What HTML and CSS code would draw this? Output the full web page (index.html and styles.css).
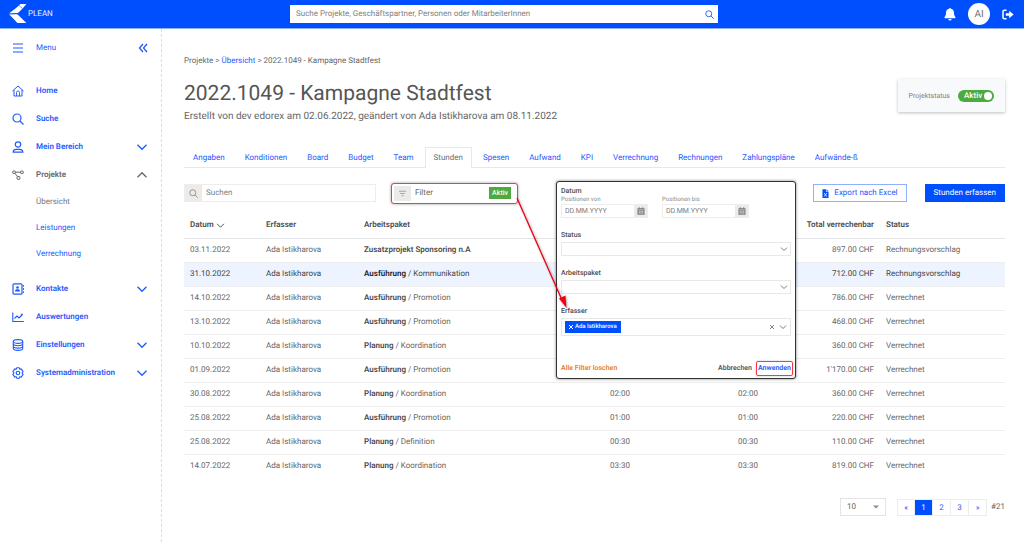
FILE: index.html
```html
<!DOCTYPE html>
<html lang="de">
<head>
<meta charset="utf-8">
<title>Plean – Stunden</title>
<link rel="stylesheet" href="styles.css">
</head>
<body>
<svg class="sprite" aria-hidden="true">
  <symbol id="chev" viewBox="0 0 12 12"><path d="M1.500 3.800 6 8.300l4.500-4.500" fill="none" stroke="currentColor" stroke-width="1.300"/></symbol>
  <symbol id="search" viewBox="0 0 12 12"><g fill="none" stroke="currentColor" stroke-width="1.200"><circle cx="5" cy="5" r="4"/><path d="m8 8 3.500 3.500"/></g></symbol>
  <symbol id="cal" viewBox="0 0 8 8"><path d="M.5 1.200h1.300V.3h.9v.9h2.600V.3h.9v.9h1.300V7.700h-7z" fill="currentColor"/><path d="M.9 2.500h6.200M1 4.300h6M1 5.900h6M2.600 3v4.300M4 3v4.300M5.400 3v4.300" stroke="#ecebe9" stroke-width=".4"/></symbol>
</svg>

<header class="topbar">
  <a class="brand" href="#">
    <svg class="brand-mark" viewBox="0 0 18 20"><path d="M8 3.200 11.400 0h6L13.600 4.500 9 9 0 9.500zM10.500 .500l2.500 3" fill="#fff"/><path d="M0 10.200 8.200 10l9.200 9H8.500z" fill="#fff"/><path d="m9.500 1 4 3.600M0 9.900h9" stroke="#0050ff" stroke-width=".6"/></svg>
    <span>PLEAN</span>
  </a>
  <form class="global-search">
    <input type="search" aria-label="Suche" placeholder="Suche Projekte, Geschäftspartner, Personen oder MitarbeiterInnen">
    <button type="button" aria-label="Suchen"><svg><use href="#search"/></svg></button>
  </form>
  <div class="user-tools">
    <button type="button" aria-label="Benachrichtigungen"><svg viewBox="0 0 12 14"><path d="M6 0c.6 0 1 .4 1 .9 2 .4 3.300 2 3.300 4 0 2.800.6 3.800 1.500 4.700.4.600.1 1.400-.7 1.400H.9c-.8 0-1.100-.8-.7-1.400.9-.9 1.500-1.900 1.500-4.700 0-2 1.300-3.600 3.300-4 0-.5.400-.9 1-.9zM4.300 11.800h3.400a1.700 1.700 0 0 1-3.400 0z" fill="#fff"/></svg></button>
    <span class="avatar">AI</span>
    <button type="button" aria-label="Abmelden"><svg viewBox="0 0 12 12"><path d="M4.500 1.800H2.300Q1 1.800 1 3v6q0 1.200 1.300 1.200h2.200" fill="none" stroke="#fff" stroke-width="1.500"/><path d="M3.800 4.700h3.400V2.200L11.600 6 7.200 9.800V7.300H3.800z" fill="#fff"/></svg></button>
  </div>
</header>

<div class="shell">
  <nav class="sidebar">
    <div class="menu-head">
      <svg class="ico" viewBox="0 0 12 12"><path d="M1 2h10M1 6h10M1 10h10" stroke="currentColor" stroke-width="1.100"/></svg>
      <span>Menu</span>
      <button type="button" aria-label="Menu einklappen"><svg viewBox="0 0 10 10"><path d="M5 1 1.500 5 5 9M9 1 5.500 5 9 9" fill="none" stroke="currentColor" stroke-width="1.300"/></svg></button>
    </div>
    <a class="item" href="#"><svg class="ico" viewBox="0 0 12 12"><g fill="none" stroke="currentColor"><path d="M.5 6 6 1l5.500 5M2 5v6h8V5"/><path d="M4.500 11V7.500a1.500 1.500 0 0 1 3 0V11" stroke-width=".9"/></g></svg><span>Home</span></a>
    <a class="item" href="#"><svg class="ico"><use href="#search"/></svg><span>Suche</span></a>
    <a class="item" href="#"><svg class="ico" viewBox="0 0 12 12"><g fill="none" stroke="currentColor" stroke-width="1.200"><circle cx="6" cy="3.500" r="2.700"/><path d="M1.200 11.200c0-2 1.500-2.900 2.800-2.900h4c1.300 0 2.800.9 2.800 2.900z"/></g></svg><span>Mein Bereich</span><svg class="arrow"><use href="#chev"/></svg></a>
    <a class="item open" href="#"><svg class="ico" viewBox="0 0 12 12"><g fill="none" stroke="currentColor"><rect x=".8" y="2" width="2.500" height="2.500" rx=".5"/><rect x="8.700" y="2" width="2.500" height="2.500" rx=".5"/><rect x="5" y="7.500" width="2.800" height="2.800" rx=".5"/><path d="M3.300 3.200h5.400M3 4.500l2.500 3"/></g></svg><span>Projekte</span><svg class="arrow"><use href="#chev"/></svg></a>
    <div class="sub">
      <a class="current" href="#">Übersicht</a>
      <a href="#">Leistungen</a>
      <a href="#">Verrechnung</a>
    </div>
    <a class="item" href="#"><svg class="ico" viewBox="0 0 12 12"><rect x="1" y=".8" width="9" height="10.400" rx="1" fill="none" stroke="currentColor" stroke-width="1.200"/><circle cx="5.500" cy="4.500" r="1.300" fill="currentColor"/><path d="M3 8.500c0-2 1-2.300 2.500-2.300S8 6.500 8 8.500zM11 2h.9v1.800H11zM11 5.100h.9v1.800H11zM11 8.200h.9V10H11z" fill="currentColor"/></svg><span>Kontakte</span><svg class="arrow"><use href="#chev"/></svg></a>
    <a class="item" href="#"><svg class="ico" viewBox="0 0 12 12"><path d="M.8 1.500v9h11M2.500 7.500 5 5l2 2 3.500-3.500M8.800 3.300h2" fill="none" stroke="currentColor" stroke-width="1.100"/></svg><span>Auswertungen</span></a>
    <a class="item" href="#"><svg class="ico" viewBox="0 0 12 12"><g fill="none" stroke="currentColor" stroke-width="1.100"><ellipse cx="6" cy="2.500" rx="4.700" ry="1.900"/><path d="M1.300 2.500v7c0 2.500 9.400 2.500 9.400 0v-7M1.300 4.800c0 2.500 9.400 2.500 9.400 0M1.300 7.200c0 2.500 9.400 2.500 9.400 0"/></g></svg><span>Einstellungen</span><svg class="arrow"><use href="#chev"/></svg></a>
    <a class="item" href="#"><svg class="ico" viewBox="0 0 12 12"><g fill="none" stroke="currentColor" stroke-width="1.100" stroke-linejoin="round"><path d="M4.800.7h2.400l.5 1.500 1.500-.3 1.900 2.700L10 6l1.100 1.400-1.900 2.700-1.500-.3-.5 1.500H4.800l-.5-1.500-1.500.3L.9 7.400 2 6 .9 4.600l1.900-2.700 1.500.3z"/><circle cx="6" cy="6" r="1.800"/></g></svg><span>Systemadministration</span><svg class="arrow"><use href="#chev"/></svg></a>
  </nav>

  <main class="content">
    <nav class="crumbs">Projekte &gt; <a href="#">Übersicht</a> &gt; 2022.1049 - Kampagne Stadtfest</nav>
    <div class="page-head">
      <div>
        <h1>2022.1049 - Kampagne Stadtfest</h1>
        <p>Erstellt von dev edorex am 02.06.2022, geändert von Ada Istikharova am 08.11.2022</p>
      </div>
      <div class="status-card">
        <label for="pstatus">Projektstatus</label>
        <span class="switch"><input type="checkbox" id="pstatus" checked><span class="switch-text">Aktiv</span></span>
      </div>
    </div>

    <nav class="tabs">
      <a href="#">Angaben</a><a href="#">Konditionen</a><a href="#">Board</a><a href="#">Budget</a><a href="#">Team</a><a class="active" href="#">Stunden</a><a href="#">Spesen</a><a href="#">Aufwand</a><a href="#">KPI</a><a href="#">Verrechnung</a><a href="#">Rechnungen</a><a href="#">Zahlungspläne</a><a href="#">Aufwände-ß</a>
    </nav>

    <div class="toolbar">
      <div class="search-box">
        <span class="addon"><svg><use href="#search"/></svg></span>
        <input type="text" aria-label="Suchen" placeholder="Suchen">
      </div>
      <div class="filter-wrap">
        <button type="button" class="filter">
          <span class="addon"><svg viewBox="0 0 12 12"><path d="M1.500 3h9M3 6h6M4.700 9h2.600" stroke="currentColor"/></svg></span>
          <span class="filter-text">Filter</span>
          <span class="tag">Aktiv</span>
        </button>
        <form class="popover">
          <h2>Datum</h2>
          <div class="dates">
            <div class="date">
              <label for="von">Positionen von</label>
              <div class="date-field"><input id="von" type="text" placeholder="DD.MM.YYYY"><button type="button" aria-label="Kalender"><svg><use href="#cal"/></svg></button></div>
            </div>
            <div class="date">
              <label for="bis">Positionen bis</label>
              <div class="date-field"><input id="bis" type="text" placeholder="DD.MM.YYYY"><button type="button" aria-label="Kalender"><svg><use href="#cal"/></svg></button></div>
            </div>
          </div>
          <div class="field">
            <label for="fstatus">Status</label>
            <div class="pick"><select id="fstatus"><option></option></select><svg><use href="#chev"/></svg></div>
          </div>
          <div class="field">
            <label for="fpaket">Arbeitspaket</label>
            <div class="pick"><select id="fpaket"><option></option></select><svg><use href="#chev"/></svg></div>
          </div>
          <div class="field">
            <span class="label">Erfasser</span>
            <div class="multi">
              <button type="button" class="chip"><svg viewBox="0 0 6 6"><path d="m1 1 4 4M5 1 1 5" stroke="currentColor"/></svg>Ada Istikharova</button>
              <button type="button" class="clear" aria-label="Leeren"><svg viewBox="0 0 6 6"><path d="m1 1 4 4M5 1 1 5" stroke="currentColor" stroke-width=".8"/></svg></button>
              <svg class="multi-arrow"><use href="#chev"/></svg>
            </div>
          </div>
          <div class="actions">
            <button type="button" class="reset">Alle Filter loschen</button>
            <button type="button" class="cancel">Abbrechen</button>
            <button type="button" class="apply">Anwenden</button>
          </div>
        </form>
        <svg class="pointer" viewBox="0 0 60 120"><g class="pointer-shape"><path d="M4 14 49 116" stroke="#f00013" stroke-width="1.300"/><path d="m53.500 124-7.500-9.500 6.500-2.900z" fill="#f00013"/></g></svg>
      </div>
      <div class="toolbar-end">
        <button type="button" class="btn"><svg viewBox="0 0 8 10"><path d="M.5 0h4v3h3v7h-7zM5.200 0l2.300 2.300H5.200z" fill="currentColor"/><path d="m2.500 4.500 3 4M5.500 4.500l-3 4" stroke="#fff" stroke-width=".9"/></svg>Export nach Excel</button>
        <button type="button" class="btn primary">Stunden erfassen</button>
      </div>
    </div>

    <table class="grid">
      <colgroup><col class="c-date"><col class="c-user"><col><col class="c-h1"><col class="c-h2"><col class="c-total"><col class="c-status"></colgroup>
      <thead><tr><th>Datum <svg><use href="#chev"/></svg></th><th>Erfasser</th><th>Arbeitspaket</th><th></th><th></th><th class="num">Total verrechenbar</th><th>Status</th></tr></thead>
      <tbody>
        <tr><td>03.11.2022</td><td>Ada Istikharova</td><td><b>Zusatzprojekt Sponsoring n.A</b></td><td></td><td></td><td class="num">897.00 CHF</td><td>Rechnungsvorschlag</td></tr>
        <tr class="hover"><td>31.10.2022</td><td>Ada Istikharova</td><td><b>Ausführung</b> / Kommunikation</td><td></td><td></td><td class="num">712.00 CHF</td><td>Rechnungsvorschlag</td></tr>
        <tr><td>14.10.2022</td><td>Ada Istikharova</td><td><b>Ausführung</b> / Promotion</td><td></td><td></td><td class="num">786.00 CHF</td><td>Verrechnet</td></tr>
        <tr><td>13.10.2022</td><td>Ada Istikharova</td><td><b>Ausführung</b> / Promotion</td><td></td><td></td><td class="num">468.00 CHF</td><td>Verrechnet</td></tr>
        <tr><td>10.10.2022</td><td>Ada Istikharova</td><td><b>Planung</b> / Koordination</td><td></td><td></td><td class="num">360.00 CHF</td><td>Verrechnet</td></tr>
        <tr><td>01.09.2022</td><td>Ada Istikharova</td><td><b>Ausführung</b> / Promotion</td><td></td><td></td><td class="num">1'170.00 CHF</td><td>Verrechnet</td></tr>
        <tr><td>30.08.2022</td><td>Ada Istikharova</td><td><b>Planung</b> / Koordination</td><td class="num">02:00</td><td class="num">02:00</td><td class="num">360.00 CHF</td><td>Verrechnet</td></tr>
        <tr><td>25.08.2022</td><td>Ada Istikharova</td><td><b>Ausführung</b> / Promotion</td><td class="num">01:00</td><td class="num">01:00</td><td class="num">220.00 CHF</td><td>Verrechnet</td></tr>
        <tr><td>25.08.2022</td><td>Ada Istikharova</td><td><b>Planung</b> / Definition</td><td class="num">00:30</td><td class="num">00:30</td><td class="num">110.00 CHF</td><td>Verrechnet</td></tr>
        <tr><td>14.07.2022</td><td>Ada Istikharova</td><td><b>Planung</b> / Koordination</td><td class="num">03:30</td><td class="num">03:30</td><td class="num">819.00 CHF</td><td>Verrechnet</td></tr>
      </tbody>
    </table>

    <div class="paging">
      <div class="page-size"><select aria-label="Einträge pro Seite"><option>10</option></select><svg viewBox="0 0 8 4"><path d="M0 0h8L4 4z" fill="#8a8a8a"/></svg></div>
      <div class="pager"><a class="step" href="#">«</a><a class="on" href="#">1</a><a href="#">2</a><a href="#">3</a><a class="step" href="#">»</a></div>
      <span>#21</span>
    </div>
  </main>
</div>
</body>
</html>
```
FILE: styles.css
```css
* { box-sizing: border-box; }
body {
  margin: 0;
  display: flex;
  flex-direction: column;
  min-height: 100vh;
  font: 8px/12px Roboto, "Liberation Sans", sans-serif;
  text-rendering: geometricPrecision;
  color: #666;
  background: #fff;
}
a { color: #1f59ff; text-decoration: none; }
button, input, select { font: inherit; text-rendering: inherit; color: inherit; border: 0; background: none; padding: 0; margin: 0; border-radius: 0; min-width: 0; }
button { cursor: pointer; }
svg { display: block; flex: none; }
b, th { font-weight: 600; color: #4c4c4c; }
.sprite { display: none; }

/* Top bar */
.topbar {
  display: grid;
  grid-template-columns: 290px 1fr 306px;
  align-items: center;
  height: 29px;
  background: #004fff;
  border-bottom: 1px solid #8fb0ff;
}
.brand { display: flex; align-items: center; gap: 1px; padding-left: 9px; color: #e8efff; }
.brand-mark { width: 18px; height: 20px; }
.global-search { display: flex; align-items: center; height: 18px; background: #fff; }
.global-search input { flex: 1; padding-left: 6px; outline: 0; }
.global-search button { padding-right: 4px; color: #1f59ff; }
.global-search svg { width: 9px; height: 9px; }
::placeholder { color: #808080; opacity: 1; }
.user-tools { display: flex; align-items: center; justify-content: flex-end; gap: 12px; padding-right: 10px; }
.user-tools svg { width: 12px; height: 13px; }
.avatar { width: 22px; height: 22px; border-radius: 50%; background: #fff; color: #6e6e6e; text-align: center; font-size: 10px; line-height: 23px; }

/* Side navigation */
.shell { display: flex; flex: 1; }
.sidebar { width: 162px; flex: none; border-right: 1px dashed #dedede; padding-top: 5px; color: #1f59ff; }
.menu-head, .item { display: flex; align-items: center; height: 28px; gap: 12px; padding: 0 13px 0 12px; }
.menu-head { margin-bottom: 15px; }
.menu-head button { margin-left: auto; }
.menu-head button svg { width: 10px; height: 10px; }
.ico { width: 12px; height: 12px; }
.item { font-weight: 600; }
.arrow { width: 12px; height: 12px; margin-left: auto; }
.open { color: #666; }
.open .arrow { transform: rotate(180deg); }
.sub { padding-bottom: 8px; }
.sub a { display: block; line-height: 26px; padding-left: 36px; }
.sub .current { color: #777; }

/* Content */
.content { flex: 1; min-width: 0; padding: 26px 19px 20px 22px; }
.page-head { display: flex; justify-content: space-between; align-items: flex-start; margin-top: 12px; }
h1 { margin: 0; font-size: 21px; line-height: 30px; font-weight: 400; color: #555; }
.page-head p { margin: 1px 0 0; font-size: 10px; line-height: 14px; color: #666; }
.status-card {
  display: flex; align-items: center; gap: 8px;
  height: 33px; padding: 0 11px;
  background: #f8f9fb;
  box-shadow: 0 1px 3px #00000040;
  font-size: 7px;
  color: #808080;
}
.switch { display: flex; position: relative; font-size: 8px; }
.switch input { appearance: none; width: 36px; height: 12px; border-radius: 6px; background: #4caa40; }
.switch input::after { content: ""; display: block; width: 8px; height: 8px; margin: 2px 2px 0 auto; border-radius: 50%; background: #fff; }
.switch-text { position: absolute; left: 6px; top: 0; color: #fff; font-weight: 500; pointer-events: none; }

.tabs { display: flex; gap: 2px; height: 21px; margin-top: 23px; border-bottom: 1px solid #e6e8ec; }
.tabs a { padding: 0 9px; line-height: 21px; }
.tabs .active { height: 21px; padding: 0 8px; color: #6e6e6e; background: #fff; border: 1px solid #e6e8ec; border-bottom: 0; line-height: 19px; }

.toolbar { display: flex; align-items: center; height: 18px; margin-top: 16px; }
.search-box { display: flex; width: 192px; height: 18px; border: 1px solid #ededed; }
.search-box input { flex: 1; padding-left: 4px; }
.addon { display: grid; place-items: center; width: 17px; height: 100%; background: #ecebe9; color: #8c8c8c; }
.addon svg { width: 9px; height: 9px; }
.filter-wrap { position: relative; margin-left: 15px; }
.filter { display: flex; align-items: center; width: 127px; height: 21px; padding: 2px; border: 1px solid #f43b46; border-radius: 3px; background: #fff; box-shadow: 0 0 3px #0006; }
.filter-text { padding-left: 4px; }
.tag { margin: 0 4px 0 auto; padding: 0 3px; background: #4caa40; color: #fff; font-size: 7px; font-weight: 500; }

.popover {
  position: absolute; left: 165px; top: -2px; z-index: 2;
  width: 240px;
  padding: 4px 4px 2px;
  background: #fff;
  border: 1px solid #333; border-radius: 3px;
  box-shadow: 0 0 3px #0008;
  font-size: 7px; line-height: 10px;
}
.popover h2, .field label, .label { display: block; margin: 0; font-size: 7px; line-height: 10px; font-weight: 500; color: #4c4c4c; }
.dates { display: flex; gap: 14px; }
.date { width: 87px; }
.date label { display: block; font-size: 6px; line-height: 8px; color: #888; }
.date-field { display: flex; height: 14px; border: 1px solid #ededed; }
.date-field input { flex: 1; padding-left: 3px; }
.date-field button { display: grid; place-items: center; width: 13px; background: #ecebe9; color: #777; }
.date-field svg { width: 8px; height: 8px; }
.field { margin-top: 12px; }
.field label, .label { margin: 0 0 2px; }
.pick { position: relative; }
.pick select { display: block; appearance: none; width: 100%; height: 14px; border: 1px solid #e8e8e8; }
.pick svg { position: absolute; right: 3px; top: 3px; width: 8px; height: 8px; pointer-events: none; }
.multi { display: flex; align-items: center; gap: 4px; height: 18px; padding: 0 3px; border: 1px solid #e8e8e8; }
.multi-arrow { width: 8px; height: 8px; }
.chip { display: flex; align-items: center; gap: 1px; height: 12px; padding: 0 4px 0 3px; background: #004fff; color: #fff; font-size: 6px; font-weight: 500; }
.chip svg, .clear svg { width: 6px; height: 6px; }
.clear { margin-left: auto; }
.actions { display: flex; align-items: center; margin: 25px -2px 0 0; }
.actions button { font-weight: 600; }
.reset { color: #ea7d24; }
.cancel { margin-left: auto; color: #555; }
.apply { margin-left: 4px; height: 15px; padding: 0 1px; color: #1f59ff; border: 1px solid #f43b46; border-radius: 2px; box-shadow: 0 0 2px #0004; }
.pointer { position: absolute; left: 122px; top: 1px; z-index: 3; width: 60px; height: 120px; overflow: visible; pointer-events: none; }
.pointer-shape { filter: drop-shadow(1px 1px 1px #0005); }

.toolbar-end { display: flex; gap: 18px; margin-left: auto; }
.btn { display: flex; align-items: center; gap: 5px; height: 18px; padding: 0 8px; border: 1px solid #8fb0ff; color: #1f59ff; }
.btn svg { width: 7px; height: 9px; color: #004fff; }
.primary { background: #004fff; border-color: #004fff; color: #fff; }

/* Hours table */
.grid { width: 100%; margin-top: 11px; table-layout: fixed; border-collapse: collapse; }
.c-date { width: 76px; }
.c-user { width: 98px; }
.c-h1 { width: 92px; }
.c-h2 { width: 128px; }
.c-total { width: 116px; }
.c-status { width: 125px; }
th, td { height: 24px; padding: 0 6px; text-align: left; white-space: nowrap; border-bottom: 1px solid #eee; }
th { height: 25px; border-bottom-color: #e2e4e8; }
th svg { display: inline-block; width: 9px; height: 9px; vertical-align: middle; }
.grid tbody tr:last-child td { border-bottom: 0; }
.grid .num { text-align: right; }
.hover { background: #edf4ff; color: #444; }
.hover b { color: #222; }

.paging { display: flex; align-items: center; justify-content: flex-end; margin-top: 20px; }
.page-size { position: relative; margin-right: 11px; }
.page-size select { display: block; appearance: none; width: 46px; height: 18px; padding-left: 6px; border: 1px solid #e4e4e4; }
.page-size svg { position: absolute; right: 7px; top: 7px; width: 6px; height: 4px; pointer-events: none; }
.pager { display: flex; height: 17px; margin-right: 4px; border: 1px solid #ebedf0; }
.pager a { width: 18px; line-height: 15px; text-align: center; border-right: 1px solid #ebedf0; }
.pager a:last-child { border-right: 0; }
.pager .step { width: 17px; }
.pager .on { background: #004fff; color: #fff; }
```
